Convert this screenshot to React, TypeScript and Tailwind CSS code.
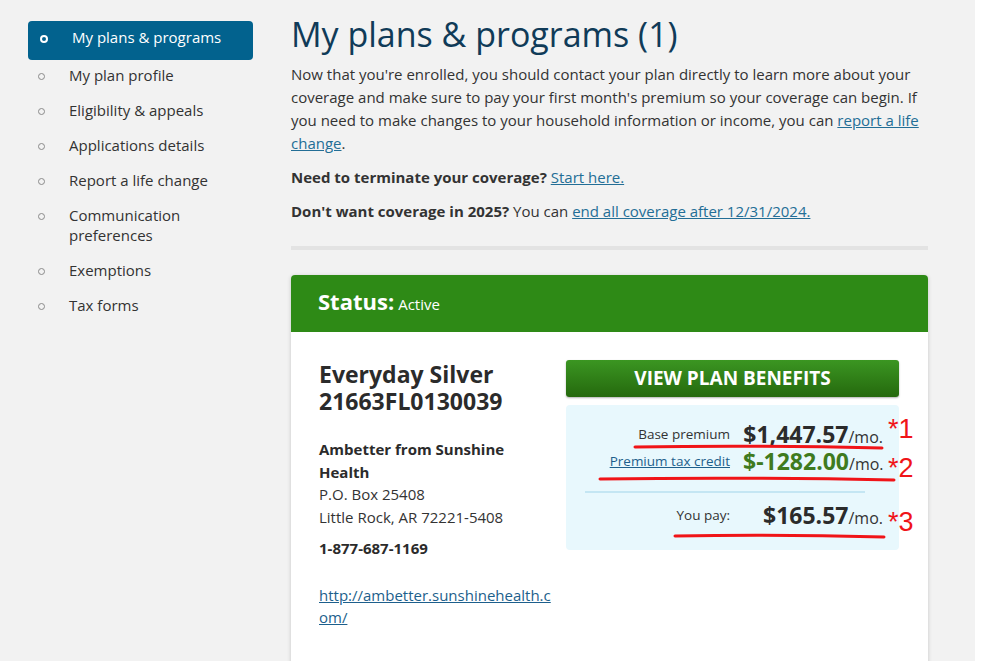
import React from "react";

const items = [
  "My plan profile",
  "Eligibility & appeals",
  "Applications details",
  "Report a life change",
  "Communication preferences",
  "Exemptions",
  "Tax forms",
];

function Row({
  label,
  amount,
  green,
  className,
}: {
  label: React.ReactNode;
  amount: string;
  green?: boolean;
  className?: string;
}) {
  return (
    <div className={"flex " + (className ?? "")}>
      <div className="flex-1 text-right text-[13.5px] leading-[27px] text-[#333]">{label}</div>
      <div className="ml-[13px] w-[140px] whitespace-nowrap text-right text-[23px] leading-[27px]">
        <span className={"font-bold " + (green ? "text-[#3f7b1f]" : "text-[#2b2b2b]")}>{amount}</span>
        <span className="text-[16px] leading-none text-[#333]">/mo.</span>
      </div>
    </div>
  );
}

export default function App() {
  return (
    <div className="flex h-[661px] w-[990px] overflow-hidden bg-white font-['Open_Sans',sans-serif] text-[#333]">
      <div className="flex w-[975px] shrink-0 bg-[#f2f2f2]">
        <aside className="ml-[28px] w-[225px] shrink-0 pt-[21px]">
          <div className="flex h-[39px] items-start rounded-[4px] bg-[#02628e] pt-[6px] text-white">
            <span className="ml-[12px] mt-[8px] h-[8px] w-[8px] shrink-0 rounded-full border-2 border-white" />
            <span className="ml-[24px] text-[15px] leading-[20px]">My plans &amp; programs</span>
          </div>
          <ul className="-mt-[3px]">
            {items.map((t) => (
              <li key={t} className="flex py-[7.5px] text-[15px] leading-[20px]">
                <span className="ml-[10px] mt-[8px] h-[7px] w-[7px] shrink-0 rounded-full border-[1.5px] border-[#8a8a8a]" />
                <span className="ml-[24px] w-[184px]">{t}</span>
              </li>
            ))}
          </ul>
        </aside>

        <main className="ml-[38px] w-[637px] shrink-0 pt-[17px]">
          <h1 className="text-[34px] font-normal leading-[35px] text-[#103b58]">My plans &amp; programs (1)</h1>
          <p className="mt-[11px] text-[15px] leading-[22.86px]">
            Now that you're enrolled, you should contact your plan directly to learn more about your coverage and make
            sure to pay your first month's premium so your coverage can begin. If you need to make changes to your
            household information or income, you can{" "}
            <a className="text-[#236e96] underline">report a life change</a>.
          </p>
          <p className="mt-[11.5px] text-[15px] leading-[22.86px]">
            <b>Need to terminate your coverage?</b> <a className="text-[#236e96] underline">Start here.</a>
          </p>
          <p className="mt-[11.5px] text-[15px] leading-[22.86px]">
            <b>Don't want coverage in 2025?</b> You can{" "}
            <a className="text-[#236e96] underline">end all coverage after 12/31/2024.</a>
          </p>
          <div className="mt-[23px] h-[4px] bg-[#e3e3e3]" />

          <section className="mt-[24.5px] rounded-t-[4px] shadow-[0_1px_4px_rgba(0,0,0,0.18)]">
            <div className="flex h-[57px] items-baseline rounded-t-[4px] bg-[#2e8a16] pl-[27px] pt-[14px] text-white">
              <span className="text-[22px] font-bold leading-[24px]">Status:</span>
              <span className="ml-[4px] text-[15px] leading-[24px]">Active</span>
            </div>
            <div className="flex justify-between bg-white pb-[60px] pl-[28px] pr-[29px] pt-[28px]">
              <div className="w-[235px]">
                <h2 className="mt-[1px] text-[23px] font-bold leading-[27px] text-[#2b2b2b]">
                  Everyday Silver 21663FL0130039
                </h2>
                <div className="mt-[23.5px] text-[15px] leading-[22.5px]">
                  <div className="font-bold text-[#2b2b2b]">Ambetter from Sunshine Health</div>
                  <div>P.O. Box 25408</div>
                  <div>Little Rock, AR 72221-5408</div>
                </div>
                <div className="mt-[9px] text-[15px] font-bold leading-[22.5px] text-[#2b2b2b]">1-877-687-1169</div>
                <a className="mt-[24px] block break-all text-[15px] leading-[22.5px] text-[#1d5f8c] underline">
                  http://ambetter.sunshinehealth.com/
                </a>
              </div>

              <div className="w-[333px]">
                <div className="flex h-[37px] items-center justify-center rounded-[3px] bg-gradient-to-b from-[#3b9622] to-[#25690d] text-[19px] font-bold leading-[19px] text-white shadow-[0_1px_2px_rgba(0,0,0,0.3)]">
                  VIEW PLAN BENEFITS
                </div>
                <div className="relative mt-[8px] h-[145px] rounded-[4px] bg-[#e8f8fd] pr-[16px] pt-[16px]">
                  <Row label="Base premium" amount="$1,447.57" />
                  <Row
                    label={<a className="text-[#1d5f8c] underline">Premium tax credit</a>}
                    amount="$-1282.00"
                    green
                  />
                  <div className="ml-[19px] mr-[18px] mt-[16.5px] h-[2px] bg-[#c4e6f3]" />
                  <Row className="mt-[9px]" label="You pay:" amount="$165.57" />

                  <svg
                    className="pointer-events-none absolute left-0 top-0 overflow-visible"
                    width="333"
                    height="145"
                    viewBox="0 0 333 145"
                  >
                    <path d="M69 42 Q190 40 316 43" stroke="#f01418" strokeWidth="3" fill="none" strokeLinecap="round" />
                    <path d="M34 74 Q180 72 328 75" stroke="#f01418" strokeWidth="3" fill="none" strokeLinecap="round" />
                    <path d="M109 131 Q210 129 318 132" stroke="#f01418" strokeWidth="3" fill="none" strokeLinecap="round" />
                  </svg>
                  <span className="absolute left-[322px] top-[11px] font-['Liberation_Sans',Arial,sans-serif] text-[27px] leading-none text-[#f01418]">
                    *1
                  </span>
                  <span className="absolute left-[322px] top-[50px] font-['Liberation_Sans',Arial,sans-serif] text-[27px] leading-none text-[#f01418]">
                    *2
                  </span>
                  <span className="absolute left-[322px] top-[104px] font-['Liberation_Sans',Arial,sans-serif] text-[27px] leading-none text-[#f01418]">
                    *3
                  </span>
                </div>
              </div>
            </div>
          </section>
        </main>
      </div>
    </div>
  );
}
